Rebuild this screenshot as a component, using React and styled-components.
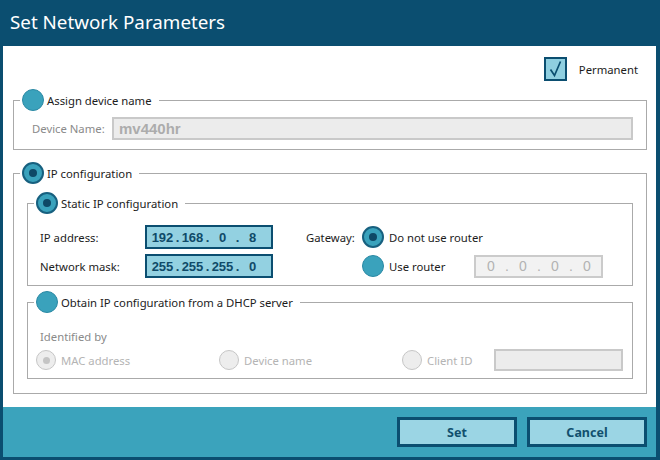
import React from 'react';
import styled, { createGlobalStyle } from 'styled-components';

const GlobalStyle = createGlobalStyle`
  html, body {
    margin: 0;
    padding: 0;
    background: #0b4e70;
  }
  * {
    box-sizing: border-box;
  }
`;

const Window = styled.div`
  width: 660px;
  height: 460px;
  display: flex;
  flex-direction: column;
  background: #0b4e70;
  padding: 0 4px 3px 3px;
  font-family: 'Noto Sans', 'Open Sans', sans-serif;
  font-size: 11.3px;
  color: #1c1c1c;
`;

const TitleBar = styled.div`
  height: 46px;
  flex: none;
  display: flex;
  align-items: center;
  padding-left: 7px;
  padding-bottom: 2px;
  color: #fff;
  font-size: 18.8px;
`;

const Body = styled.div`
  flex: 1;
  background: #fff;
  display: flex;
  flex-direction: column;
  padding: 11px 9px 13px 10px;
`;

const PermanentRow = styled.label`
  height: 24px;
  display: flex;
  align-items: center;
  justify-content: flex-end;
  gap: 12px;
  padding-right: 9px;
`;

const CheckBox = styled.span`
  width: 23px;
  height: 24px;
  flex: none;
  border: 2px solid #0b4e70;
  background: #8fcfe0;
  display: flex;
  align-items: center;
  justify-content: center;
`;

const Group = styled.fieldset`
  margin: ${p => p.$top || 0}px 0 0 0;
  padding: 0;
  min-width: 0;
  border: 1px solid #aaaaaa;
`;

const Legend = styled.legend`
  display: flex;
  align-items: center;
  gap: 3px;
  margin-left: 6px;
  padding: 0 7px 0 2px;
  height: 22px;
`;

const Radio = styled.span`
  width: ${p => p.$size || 22}px;
  height: ${p => p.$size || 22}px;
  flex: none;
  border-radius: 50%;
  display: inline-flex;
  align-items: center;
  justify-content: center;
  background: ${p => (p.$disabled ? '#ededed' : '#3aa2bc')};
  border: ${p =>
    p.$disabled ? '1px solid #c6c6c6' : p.$checked ? '2px solid #17607f' : '1px solid #2b89a4'};

  &::after {
    content: '';
    display: ${p => (p.$checked ? 'block' : 'none')};
    width: ${p => (p.$disabled ? 7 : 8)}px;
    height: ${p => (p.$disabled ? 7 : 8)}px;
    border-radius: 50%;
    background: ${p => (p.$disabled ? '#c4c4c4' : '#0e4866')};
  }
`;

const Content = styled.div`
  padding: ${p => p.$pad};
  display: flex;
  flex-direction: column;
  gap: ${p => p.$gap || 0}px;
`;

const FieldRow = styled.div`
  display: flex;
  align-items: center;
  height: ${p => p.$h || 23}px;
  padding-left: ${p => p.$indent || 0}px;
`;

const Label = styled.span`
  color: ${p => (p.$muted ? '#8a8a8a' : 'inherit')};
  width: ${p => (p.$w ? `${p.$w}px` : 'auto')};
  flex: none;
`;

const TextInput = styled.div`
  flex: ${p => (p.$w ? 'none' : 1)};
  width: ${p => (p.$w ? `${p.$w}px` : 'auto')};
  height: ${p => p.$h || 23}px;
  background: #ececec;
  border: 2px solid #c9c9c9;
  padding-left: 5px;
  display: flex;
  align-items: center;
  font-family: 'Liberation Sans', Arial, sans-serif;
  font-weight: bold;
  font-size: 15px;
  color: #acacac;
`;

const StaticGrid = styled.div`
  display: grid;
  grid-template-columns: 105px 128px 33px 56px 1fr;
  grid-template-rows: 24px 24px;
  row-gap: 5px;
  align-items: center;
`;

const IpBox = styled.div`
  width: ${p => (p.$disabled ? 129 : 128)}px;
  height: ${p => (p.$disabled ? 23 : 24)}px;
  display: flex;
  align-items: center;
  padding-left: ${p => (p.$disabled ? 5 : 4)}px;
  border: 2px solid ${p => (p.$disabled ? '#cbcbcb' : '#0b4e70')};
  background: ${p => (p.$disabled ? '#f2f2f2' : '#93d1e1')};
  font-family: 'Liberation Sans', Arial, sans-serif;
  font-size: ${p => (p.$disabled ? 14 : 13)}px;
  font-weight: ${p => (p.$disabled ? 'normal' : 'bold')};
  color: ${p => (p.$disabled ? '#b3b3b3' : '#0f4a68')};
`;

const Octet = styled.span`
  width: ${p => (p.$disabled ? 20 : 23)}px;
  text-align: center;
`;

const Dot = styled.span`
  width: ${p => (p.$disabled ? 12 : 7)}px;
  text-align: center;
`;

const Choice = styled.div`
  display: flex;
  align-items: center;
  gap: 5px;
  color: ${p => (p.$disabled ? '#b4b4b4' : 'inherit')};
`;

const ChoiceGrid = styled.div`
  display: grid;
  grid-template-columns: 183px 183px 92px 129px;
  align-items: center;
  height: 22px;
  padding-left: 8px;
`;

const Footer = styled.div`
  height: 50px;
  flex: none;
  background: #3ba3bc;
  display: flex;
  justify-content: flex-end;
  align-items: flex-start;
  gap: 10px;
  padding: 10px 9px 0 0;
`;

const Button = styled.button`
  width: 120px;
  height: 30px;
  border: 3px solid #0b4e70;
  background: #9bd5e4;
  font-family: 'Noto Sans', 'Open Sans', sans-serif;
  font-size: 12.5px;
  font-weight: bold;
  color: #11506e;
  padding: 0;
`;

function IpAddress({ parts, disabled }) {
  return (
    <IpBox $disabled={disabled}>
      {parts.map((part, i) => (
        <React.Fragment key={i}>
          {i > 0 && <Dot $disabled={disabled}>.</Dot>}
          <Octet $disabled={disabled}>{part}</Octet>
        </React.Fragment>
      ))}
    </IpBox>
  );
}

export default function App() {
  return (
    <Window>
      <GlobalStyle />
      <TitleBar>Set Network Parameters</TitleBar>
      <Body>
        <PermanentRow>
          <CheckBox>
            <svg width="19" height="20" viewBox="0 0 19 20">
              <path d="M4.5 10.5 L8.5 16.5 L14.5 2.5" fill="none" stroke="#0b4e70" strokeWidth="1.7" />
            </svg>
          </CheckBox>
          Permanent
        </PermanentRow>

        <Group $top={8}>
          <Legend>
            <Radio />
            Assign device name
          </Legend>
          <Content $pad="6px 13px 9px 18px">
            <FieldRow>
              <Label $muted $w={80}>Device Name:</Label>
              <TextInput>mv440hr</TextInput>
            </FieldRow>
          </Content>
        </Group>

        <Group $top={12}>
          <Legend>
            <Radio $checked />
            IP configuration
          </Legend>
          <Content $pad="8px 13px 14px 13px">
            <Group>
              <Legend>
                <Radio $checked />
                Static IP configuration
              </Legend>
              <Content $pad="11px 12px 7px 12px">
                <StaticGrid>
                  <span>IP address:</span>
                  <IpAddress parts={['192', '168', '0', '8']} />
                  <span />
                  <span>Gateway:</span>
                  <Choice>
                    <Radio $checked />
                    Do not use router
                  </Choice>
                  <span>Network mask:</span>
                  <IpAddress parts={['255', '255', '255', '0']} />
                  <span />
                  <span />
                  <Choice>
                    <Radio />
                    <Label $w={80}>Use router</Label>
                    <IpAddress parts={['0', '0', '0', '0']} disabled />
                  </Choice>
                </StaticGrid>
              </Content>
            </Group>

            <Group $top={5}>
              <Legend>
                <Radio />
                Obtain IP configuration from a DHCP server
              </Legend>
              <Content $pad="15px 9px 7px 0" $gap={5}>
                <FieldRow $h={16} $indent={12}>
                  <Label $muted>Identified by</Label>
                </FieldRow>
                <ChoiceGrid>
                  <Choice $disabled>
                    <Radio $size={20} $disabled $checked />
                    MAC address
                  </Choice>
                  <Choice $disabled>
                    <Radio $size={20} $disabled />
                    Device name
                  </Choice>
                  <Choice $disabled>
                    <Radio $size={20} $disabled />
                    Client ID
                  </Choice>
                  <TextInput $w={129} $h={22} />
                </ChoiceGrid>
              </Content>
            </Group>
          </Content>
        </Group>
      </Body>
      <Footer>
        <Button>Set</Button>
        <Button>Cancel</Button>
      </Footer>
    </Window>
  );
}
